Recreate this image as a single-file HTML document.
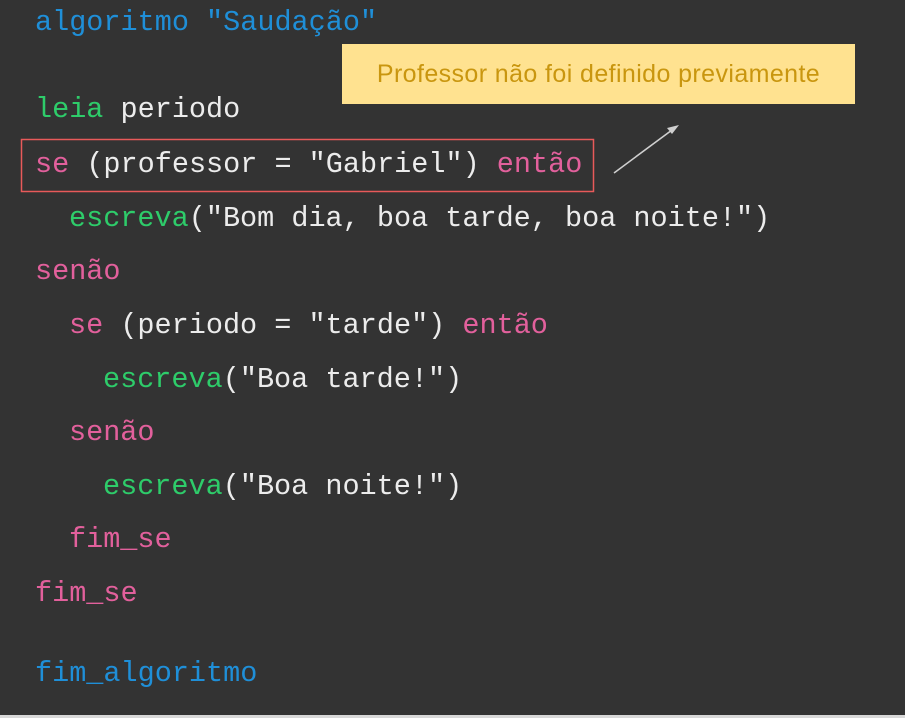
<!DOCTYPE html>
<html><head><meta charset="utf-8"><style>
html,body{margin:0;padding:0;}
body{width:905px;height:718px;background:#333333;position:relative;overflow:hidden;font-family:"Liberation Mono","Courier New",monospace;font-size:28.5px;}
.l{position:absolute;line-height:32px;white-space:pre;color:#ececec;}
.b{color:#1f8fd8}.g{color:#2ecc6a}.p{color:#e2609c}
#tip{position:absolute;left:342px;top:44px;width:513px;height:60px;background:#ffe290;color:#c9960f;font-family:"Liberation Sans",sans-serif;font-size:25px;letter-spacing:0.4px;line-height:60px;text-align:center;}
#bot{position:absolute;left:0;top:715px;width:905px;height:3px;background:#d8d8d8;}
</style></head><body>
<svg style="position:absolute;left:0;top:0" width="905" height="718">
<rect x="21.5" y="139.5" width="572" height="52" fill="none" stroke="#e85a5a" stroke-width="1.5"/>
</svg>
<div class="l b" style="left:35px;top:7px">algoritmo "Saudação"</div>
<div class="l" style="left:35px;top:94px"><span class="g">leia</span> periodo</div>
<div class="l" style="left:35px;top:149px"><span class="p">se</span> (professor = "Gabriel") <span class="p">então</span></div>
<div class="l" style="left:69px;top:203px"><span class="g">escreva</span>("Bom dia, boa tarde, boa noite!")</div>
<div class="l p" style="left:35px;top:256px">senão</div>
<div class="l" style="left:69px;top:310px"><span class="p">se</span> (periodo = "tarde") <span class="p">então</span></div>
<div class="l" style="left:103px;top:364px"><span class="g">escreva</span>("Boa tarde!")</div>
<div class="l p" style="left:69px;top:417px">senão</div>
<div class="l" style="left:103px;top:471px"><span class="g">escreva</span>("Boa noite!")</div>
<div class="l p" style="left:69px;top:524px">fim_se</div>
<div class="l p" style="left:35px;top:578px">fim_se</div>
<div class="l b" style="left:35px;top:658px">fim_algoritmo</div>
<div id="tip">Professor não foi definido previamente</div>
<svg style="position:absolute;left:0;top:0" width="905" height="718">
<line x1="614" y1="173" x2="672" y2="130" stroke="#cfcfcf" stroke-width="1.6"/>
<polygon points="679,125 667,128 672,134" fill="#cfcfcf"/>
</svg>
<div id="bot"></div>
</body></html>
